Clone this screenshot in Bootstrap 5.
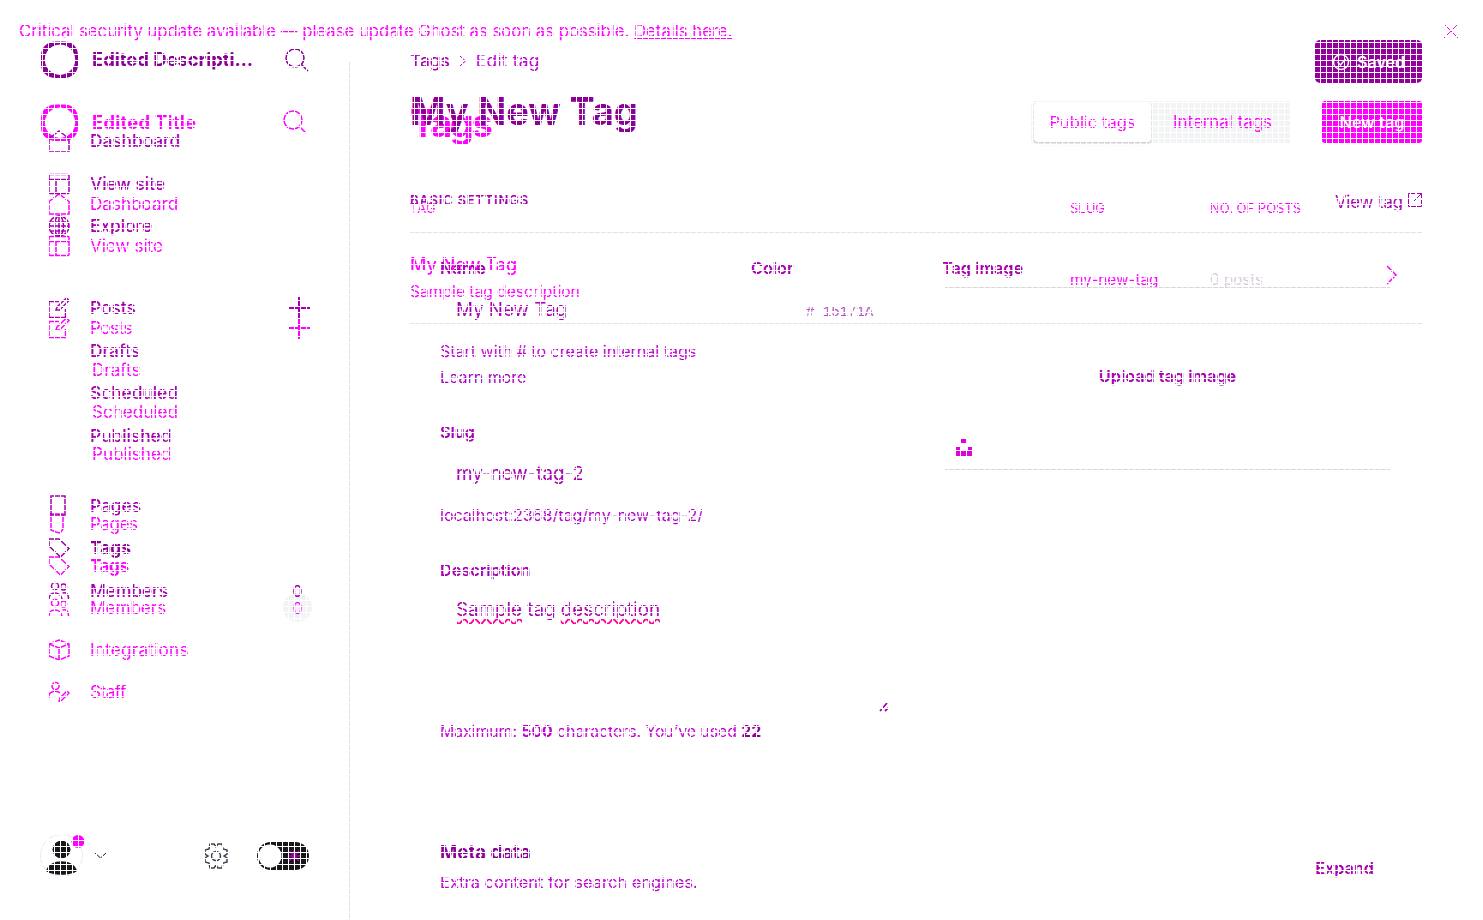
<!DOCTYPE html>
<html lang="en">
<head>
<meta charset="utf-8">
<title>Edit tag</title>
<link href="https://cdn.jsdelivr.net/npm/bootstrap@5.3.0/dist/css/bootstrap.min.css" rel="stylesheet">
<script src="https://cdn.jsdelivr.net/npm/bootstrap@5.3.0/dist/js/bootstrap.bundle.min.js"></script>
<style>
:root{--old:#ff00ff;--ink:#8c0096;--nav:#a800b0;--soft:#c000d0;--rule:#e3e3e3}
body{margin:0;background:#fff;font-family:Inter,"Liberation Sans",sans-serif;overflow:hidden}
.stage{display:grid;width:1483px;height:920px;overflow:hidden;position:relative;white-space:nowrap}
/* white mesh, one pixel in every six, over both states */
.stage::after{content:"";position:absolute;inset:0;pointer-events:none;z-index:9;background:repeating-linear-gradient(90deg,#fff 0 1px,transparent 1px 6px),repeating-linear-gradient(#fff 0 1px,transparent 1px 6px)}
.state{grid-area:1/1;display:flex;flex-direction:column;height:920px;min-width:0}
.before{color:var(--old)}
.after{color:var(--nav)}
.side{width:350px;flex:none;padding-left:40px;display:flex;flex-direction:column}
.ruled{background:linear-gradient(var(--rule),var(--rule)) 349px 0/1px 100% no-repeat}
svg{display:block;flex:none;fill:none;stroke:currentColor}
.side-row{display:flex;align-items:center;height:42px;font-size:17.1px;padding-left:8px;line-height:20px}
.after .side-row{height:42.4px;font-size:17.3px;font-weight:500}
.side-row>svg{width:22px;height:22px;stroke-width:1.5;margin-right:20px}
.sub{padding-left:52px}
.after .sub{padding-left:50px}
.side-row .plus{margin:0 40px 0 auto;stroke-width:2}
.before .narrow{letter-spacing:-.5px}
.g1{margin-top:40px}.g2{margin-top:28px}
.brand{display:flex;align-items:center;height:40px;font-size:18.400px;font-weight:700;line-height:20px}
.brand span{margin-bottom:2px}
.before .brand span{letter-spacing:.250px}
.brand .ring{width:40px;height:40px;margin-right:12px;stroke:none;fill:currentColor}
.brand .find{width:24px;height:24px;margin:0 41px 0 auto;stroke-width:1.5}
.before .find{margin-right:43px;margin-bottom:2px}
.cnt{width:29px;text-align:center;margin-left:auto;margin-right:38px;font-size:16px}
.before .cnt{height:29px;line-height:31px;border-radius:50%;background:#f1f3f4;margin-bottom:2px}
.main-col{width:1012px;margin-left:60px;flex:none;display:flex;flex-direction:column}
.l20{line-height:20px;height:20px;flex:none}
.l40{line-height:40px;height:40px;flex:none}
.banner{font-size:16.700px;padding:21px 25px 0 19px;height:62px}
.h-title{font-size:38px;font-weight:700;letter-spacing:-.1px}
.before .h-title{letter-spacing:-2.400px}
.head-b{margin-top:39px;height:42px}
.seg{width:260px;height:42px;background:#f1f3f4;border-radius:3px;padding:1px 3px;font-size:16.5px}
.seg .on{width:117px;height:39px;background:#fff;border-radius:4px;box-shadow:0 2px 3px rgba(0,0,0,.16)}
.seg .off{padding:1px 0 0 22px;font-size:16.9px}
.new-btn{width:100px;height:42px;background:var(--old);color:#fff;border-radius:3px;margin-left:31px;font-size:16.4px;font-weight:500}
.save-btn{width:107px;height:43px;background:#93009c;color:#fff;border-radius:5px;font-size:16px;font-weight:600;margin-top:40px}
.cols{display:grid;grid-template-columns:660px 140px 1fr;font-size:13px;margin-top:55px}
.tag-row{display:grid;grid-template-columns:660px 140px 1fr auto;border:solid var(--rule);border-width:1px 0;height:92px;margin-top:14px}
.form-cols{display:grid;grid-template-columns:311px 191px 1fr;margin:46px 0 0 30px}
.lab{font-size:16.250px;font-weight:600}
.inp{font-size:18.750px;padding-left:16px}
.hint{font-size:16px;color:var(--soft)}
.hex{margin:24px 0 0 55px;font:14px/20px "Liberation Mono",monospace;color:#b850c8}
.drop{border:solid #d9d9d9;border-width:1px 0;height:183px;width:445px;margin:9px 0 0 3px}
.wavy{text-decoration:underline wavy #ff0099 1.500px;text-underline-offset:2px;text-decoration-skip-ink:none}
.foot{grid-area:1/1;align-self:end;height:87px;width:350px;padding-left:40px;color:#15171a;display:flex;align-items:center;margin-bottom:21px}
</style>
</head>
<body>
<svg width="0" height="0" class="position-absolute"><defs>
<symbol id="i-ring" viewBox="0 0 40 40"><path fill-rule="evenodd" d="M16 1.500h8c9 0 14 6 14 14v9c0 8-6 13.500-14 13.500h-8C7 38 1 32 1 24.500v-9C1 7.500 7 1.500 16 1.500zM20 4.500a15.200 15.200 0 1 0 .01 0z"/></symbol>
<symbol id="i-find" viewBox="0 0 24 24"><circle cx="10" cy="10" r="9"/><path d="M16.500 16.500L23 23"/></symbol>
<symbol id="i-home" viewBox="0 0 22 22"><path d="M1 8.500L11 1l10 7.500V21H1z"/></symbol>
<symbol id="i-site" viewBox="0 0 22 22"><rect x="1" y="1.500" width="20" height="19" rx="1"/><path d="M1 6.500h20M8 6.500v14"/></symbol>
<symbol id="i-globe" viewBox="0 0 22 22"><circle cx="11" cy="11" r="10"/><ellipse cx="11" cy="11" rx="4.500" ry="10"/><path d="M1 11h20M2.500 7h17M2.500 16h17M11 1v20"/></symbol>
<symbol id="i-edit" viewBox="0 0 22 22"><path d="M11 4.500H1V20.500h16.500V12M8 13l1-3L18.500 1l2.500 2.500-9.500 9.500z"/></symbol>
<symbol id="i-plus" viewBox="0 0 22 22"><path d="M11 0v22M0 11h22"/></symbol>
<symbol id="i-page" viewBox="0 0 22 22"><path d="M3 1h14v19H3zM5 20h12v-3"/></symbol>
<symbol id="i-page-b" viewBox="0 0 22 22"><path d="M3 1h12v15l-3 4-4-1-5-2z"/></symbol>
<symbol id="i-tag" viewBox="0 0 22 22"><path d="M1 2h10l10 9.500L12.500 20 1 9z"/></symbol>
<symbol id="i-mem" viewBox="0 0 22 22"><circle cx="7" cy="6" r="3.500"/><circle cx="15.500" cy="7" r="3"/><path d="M1 19c0-4 2-6 6-6s6 2 7 6M14.500 13c4-1 6 1 6 6"/></symbol>
<symbol id="i-box" viewBox="0 0 22 22"><path d="M11 1l10 4v12l-10 4-10-4V5zM1 5l10 4 10-4M11 9v12"/></symbol>
<symbol id="i-staff" viewBox="0 0 22 22"><circle cx="7.500" cy="5" r="3.500"/><path d="M1 17v-2c0-5 8-6 11-3M11 21l1-4 7-7 2 2-7 7z"/></symbol>
</defs></svg>
<div class="stage">
  <div class="state before">
    <div class="banner d-flex justify-content-between"><div class="l20">Critical security update available — please update Ghost as soon as possible. <u>Details here.</u></div>
      <svg width="14" height="14" viewBox="0 0 14 14" style="margin-top:3px"><path d="M0 0l14 14M14 0L0 14"/></svg></div>
    <div class="d-flex flex-fill">
      <div class="side ruled">
        <div class="brand" style="margin-top:41px"><svg class="ring"><use href="#i-ring"/></svg><span>Edited Title</span><svg class="find"><use href="#i-find"/></svg></div>
        <div class="side-row" style="margin-top:40px"><svg><use href="#i-home"/></svg>Dashboard</div>
        <div class="side-row"><svg><use href="#i-site"/></svg>View site</div>
        <div class="side-row g1"><svg><use href="#i-edit"/></svg><span class="narrow">Posts</span><svg class="plus"><use href="#i-plus"/></svg></div>
        <div class="side-row sub">Drafts</div>
        <div class="side-row sub">Scheduled</div>
        <div class="side-row sub">Published</div>
        <div class="side-row g2"><svg><use href="#i-page-b"/></svg><span class="narrow">Pages</span></div>
        <div class="side-row fw-bold"><svg><use href="#i-tag"/></svg><span class="narrow">Tags</span></div>
        <div class="side-row"><svg><use href="#i-mem"/></svg>Members<span class="cnt">0</span></div>
        <div class="side-row"><svg><use href="#i-box"/></svg><span style="letter-spacing:.250px">Integrations</span></div>
        <div class="side-row"><svg><use href="#i-staff"/></svg><span class="narrow">Staff</span></div>
      </div>
      <div class="main-col">
        <div class="head-b d-flex align-items-center"><div class="h-title l40 me-auto" style="margin-top:2px">Tags</div>
          <div class="seg d-flex align-items-center"><div class="on d-flex align-items-center justify-content-center">Public tags</div><div class="off">Internal tags</div></div>
          <div class="new-btn d-flex align-items-center justify-content-center">New tag</div></div>
        <div class="cols l20"><div>TAG</div><div>SLUG</div><div>NO. OF POSTS</div></div>
        <div class="tag-row">
          <div style="padding-top:22px"><div class="l20 fw-medium" style="font-size:18px">My New Tag</div><div class="l20" style="margin-top:7px;font-size:15.600px">Sample tag description</div></div>
          <div class="l20" style="margin-top:37px;font-size:15.300px">my-new-tag</div>
          <div class="l20" style="margin-top:37px;font-size:15.200px;color:#d9c9d9">0 posts</div>
          <svg width="12" height="20" viewBox="0 0 12 20" stroke-width="1.5" style="margin:32px 24px 0 0"><path d="M1 1l9 9-9 9"/></svg>
        </div>
      </div>
    </div>
  </div>
  <div class="state after flex-row">
    <div class="side">
      <div class="brand" style="margin-top:40px;color:var(--ink)"><svg class="ring"><use href="#i-ring"/></svg><span>Edited Descripti…</span><svg class="find"><use href="#i-find"/></svg></div>
      <div class="side-row" style="margin-top:40px"><svg><use href="#i-home"/></svg>Dashboard</div>
      <div class="side-row"><svg><use href="#i-site"/></svg>View site</div>
      <div class="side-row"><svg><use href="#i-globe"/></svg>Explore</div>
      <div class="side-row g1"><svg><use href="#i-edit"/></svg>Posts<svg class="plus"><use href="#i-plus"/></svg></div>
      <div class="side-row sub">Drafts</div>
      <div class="side-row sub">Scheduled</div>
      <div class="side-row sub">Published</div>
      <div class="side-row g2"><svg><use href="#i-page"/></svg>Pages</div>
      <div class="side-row fw-bold" style="color:var(--ink)"><svg><use href="#i-tag"/></svg>Tags</div>
      <div class="side-row"><svg><use href="#i-mem"/></svg>Members<span class="cnt">0</span></div>
    </div>
    <div class="main-col">
      <div class="d-flex justify-content-between" style="height:83px;font-size:17.300px">
        <div class="l20 d-flex" style="margin-top:51px"><span class="fw-medium">Tags</span><svg width="6" height="10" viewBox="0 0 6 10" style="margin:5px 10px 0"><path d="M0 0l5.500 5L0 10"/></svg><span style="color:var(--soft);letter-spacing:.250px">Edit tag</span></div>
        <div class="save-btn d-flex align-items-center justify-content-center"><svg width="18" height="18" viewBox="0 0 18 18" stroke-width="1.500" style="margin-right:7px"><circle cx="9" cy="9" r="7.500"/><path d="M5.500 9l3 3 5-6"/></svg>Saved</div>
      </div>
      <div class="h-title l40" style="margin-top:8px;color:var(--ink)">My New Tag</div>
      <div class="d-flex justify-content-between" style="margin-top:59px"><div class="l20" style="font-size:13px;font-weight:600;letter-spacing:.780px">BASIC SETTINGS</div>
        <div class="l20 d-flex" style="font-size:16.600px;margin-top:2px">View tag<svg width="14" height="14" viewBox="0 0 14 14" style="margin:1px 0 0 5px"><path d="M7 .5H.5v13h13V7M9 .5h4.500V5M13.500.5L6 8"/></svg></div></div>
      <div class="form-cols">
        <div>
          <div class="l20 lab">Name</div>
          <div class="l20 inp" style="margin-top:22px">My New Tag</div>
          <div class="l20 hint" style="margin-top:21px">Start with # to create internal tags</div>
          <div class="l20 hint" style="margin-top:6px;color:#a800c0">Learn more</div>
          <div class="l20 lab" style="margin-top:35px">Slug</div>
          <div class="l20 inp" style="margin-top:22px">my-new-tag-2</div>
          <div class="l20 hint" style="margin-top:21px;color:#b400c8">localhost:2368/tag/my-new-tag-2/</div>
          <div class="l20 lab" style="margin-top:35px">Description</div>
          <div class="d-flex" style="margin-top:20px;width:450px;height:113px"><div class="l20 inp"><span class="wavy">Sample</span> tag <span class="wavy">description</span></div>
            <svg class="ms-auto align-self-end" width="11" height="11" viewBox="0 0 11 11" stroke-width="1.800"><path d="M1 9l7-8M6 9l3-3"/></svg></div>
          <div class="l20 hint" style="margin-top:9px;font-size:15.750px">Maximum: <b>500</b> characters. You’ve used <b style="color:var(--ink)">22</b></div>
          <div class="d-flex justify-content-between" style="width:934px;margin-top:100px"><div><div class="l20 fw-bold" style="font-size:18.600px;color:var(--ink)">Meta data</div><div class="l20 hint" style="margin-top:10px;font-size:16.450px">Extra content for search engines.</div></div>
            <div class="l20 lab" style="margin-top:16px">Expand</div></div>
        </div>
        <div><div class="l20 lab">Color</div><div class="hex">#&nbsp;15171A</div></div>
        <div><div class="l20 lab">Tag image</div>
          <div class="drop d-flex flex-column"><div class="l20 lab text-center" style="margin-top:78px">Upload tag image</div>
            <svg class="mt-auto" width="18" height="18" viewBox="0 0 18 18" style="margin:0 0 12px 11px;fill:#e000e0;stroke:none"><path d="M5 0h6v4H5zM0 8h4v4h8V8h5v9H0z"/></svg></div></div>
      </div>
    </div>
  </div>
  <div class="foot">
    <svg width="45" height="45" viewBox="0 0 45 45" style="stroke:none;fill:#15171a"><circle cx="21.500" cy="22.500" r="21" fill="none" stroke="#e8e8e8"/><circle cx="21.500" cy="16.500" r="9"/><path d="M6 38c3-13 28-13 31 0-7 5-24 5-31 0z"/><circle cx="38" cy="8.500" r="6.500" fill="#f0f"/></svg>
    <svg width="13" height="7" viewBox="0 0 13 7" style="margin-left:9px"><path d="M0 0l6.500 6L13 0"/></svg>
    <svg width="24" height="26" viewBox="0 0 24 26" stroke-width="1.500" style="margin-left:97px;color:#394047"><circle cx="12" cy="13" r="4.500"/><path d="M12 4L14 1h4l1 5 4 1v4l-3 2 3 2v4l-4 1-1 5h-4l-2-3-2 3H6l-1-5-4-1v-4l3-2-3-2V7l4-1 1-5h4z"/></svg>
    <svg width="52" height="28" viewBox="0 0 52 28" style="margin-left:29px;stroke:none"><rect width="52" height="28" rx="14" fill="#15171a"/><circle cx="13" cy="14" r="11.500" fill="#fff"/><path d="M37 8v13M31 14h13M32 9l10 10M42 9L32 19" stroke="#a800b0" stroke-width="1.500"/></svg>
  </div>
</div>
</body>
</html>
